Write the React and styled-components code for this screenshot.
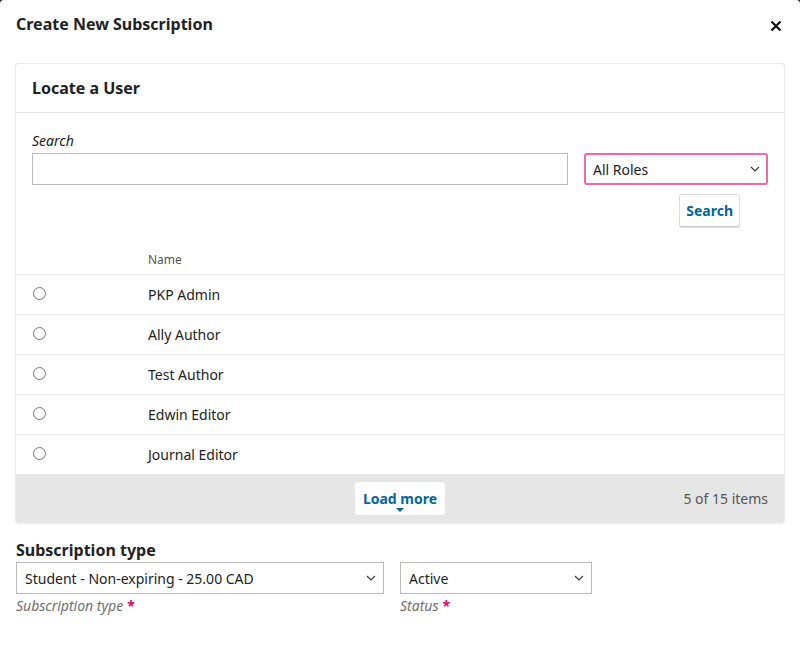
import React from 'react';
import styled, { createGlobalStyle } from 'styled-components';

const GlobalStyle = createGlobalStyle`
  html, body {
    margin: 0;
    padding: 0;
    background: #2a2a2a;
  }
  body {
    font-family: 'Noto Sans', 'Open Sans', sans-serif;
    color: #222;
  }
`;

const Modal = styled.div`
  background: #fff;
  border-radius: 4px 4px 0 0;
  min-height: 650px;
  padding: 0 16px;
  box-sizing: border-box;
`;

const ModalHeader = styled.div`
  display: flex;
  align-items: center;
  justify-content: space-between;
  height: 48px;
  h2 {
    margin: 0;
    font-size: 16px;
    font-weight: 700;
  }
`;

const CloseButton = styled.button`
  border: 0;
  background: none;
  padding: 0;
  margin-right: 2px;
  margin-top: 4px;
  display: flex;
  cursor: pointer;
`;

const Card = styled.div`
  margin-top: 16px;
  background: #fff;
  border-radius: 3px;
  box-shadow: 0 0 0 1px #e9e9e9, 0 1px 2px rgba(0, 0, 0, 0.25);
`;

const CardHeader = styled.div`
  height: 48px;
  display: flex;
  align-items: center;
  padding: 0 16px;
  border-bottom: 1px solid #e2e2e2;
  font-size: 16px;
  font-weight: 700;
`;

const SearchArea = styled.div`
  padding: 18px 16px 17px;
`;

const FieldLabel = styled.label`
  display: block;
  font-size: 14px;
  font-style: italic;
  line-height: 20px;
  margin-bottom: 2px;
  color: ${({ muted }) => (muted ? '#707070' : '#222')};
`;

const SearchRow = styled.div`
  display: grid;
  grid-template-columns: 1fr 184px;
  gap: 16px;
`;

const TextInput = styled.input`
  height: 32px;
  box-sizing: border-box;
  border: 1px solid #bbb;
  border-radius: 0;
  padding: 0 8px;
  font: inherit;
  font-size: 14px;
`;

const SelectWrap = styled.div`
  position: relative;
  width: ${({ width }) => width || 'auto'};
  svg {
    position: absolute;
    right: 8px;
    top: 50%;
    transform: translateY(-50%);
    pointer-events: none;
  }
`;

const Select = styled.select`
  appearance: none;
  width: 100%;
  height: 32px;
  box-sizing: border-box;
  background: #fff;
  border: ${({ focused }) => (focused ? '2px solid #ec6aa6' : '1px solid #bbb')};
  border-radius: ${({ focused }) => (focused ? '3px' : '0')};
  padding: 0 ${({ focused }) => (focused ? '7px' : '8px')};
  font: inherit;
  font-size: 14px;
  color: #222;
  outline: none;
`;

const ButtonRow = styled.div`
  display: flex;
  justify-content: flex-end;
  margin-top: 9px;
  padding-right: 28px;
`;

const Button = styled.button`
  height: 33px;
  padding: 0 6px;
  background: #fff;
  border: 1px solid #ddd;
  border-bottom-color: #ccc;
  border-radius: 3px;
  box-shadow: 0 1px 0 #ddd;
  font: inherit;
  font-size: 14px;
  font-weight: 700;
  color: #006798;
  cursor: pointer;
`;

const Table = styled.div`
  font-size: 14px;
`;

const Row = styled.div`
  display: grid;
  grid-template-columns: 132px 1fr;
  align-items: center;
  height: ${({ head }) => (head ? '30px' : '39px')};
  border-bottom: 1px solid #e6e6e6;
  ${({ head }) => head && 'font-size: 12px; color: #555;'}
`;

const Radio = styled.span`
  width: 11px;
  height: 11px;
  border: 1px solid #767676;
  border-radius: 50%;
  margin-left: 17px;
  margin-top: -2px;
`;

const Footer = styled.div`
  display: grid;
  grid-template-columns: 1fr auto 1fr;
  align-items: center;
  height: 47px;
  background: #e6e6e6;
  padding: 0 16px;
  border-radius: 0 0 3px 3px;
`;

const LoadMore = styled.button`
  position: relative;
  height: 33px;
  width: 90px;
  background: #fff;
  border: 0;
  border-radius: 3px;
  font: inherit;
  font-size: 14px;
  font-weight: 700;
  color: #006798;
  padding: 0;
  cursor: pointer;
  &::after {
    content: '';
    position: absolute;
    left: 50%;
    bottom: 3px;
    margin-left: -4px;
    border: 4px solid transparent;
    border-top-color: #006798;
    border-bottom: 0;
  }
`;

const Count = styled.span`
  justify-self: end;
  color: #555;
  font-size: 14px;
`;

const Section = styled.div`
  margin-top: 17px;
  h3 {
    margin: 0;
    font-size: 16px;
    font-weight: 700;
    line-height: 22px;
    margin-bottom: 1px;
  }
`;

const FieldRow = styled.div`
  display: flex;
  gap: 16px;
`;

const Field = styled.div`
  label {
    margin-top: 2px;
  }
`;

const Required = styled.span`
  color: #d00a6c;
  font-style: normal;
  font-weight: 700;
  margin-left: 4px;
`;

const Chevron = () => (
  <svg width="10" height="6" viewBox="0 0 10 6" fill="none">
    <path d="M1 1l4 4 4-4" stroke="#333" strokeWidth="1.1" />
  </svg>
);

const users = ['PKP Admin', 'Ally Author', 'Test Author', 'Edwin Editor', 'Journal Editor'];

const App = () => (
  <>
    <GlobalStyle />
    <Modal>
      <ModalHeader>
        <h2>Create New Subscription</h2>
        <CloseButton aria-label="Close">
          <svg width="12" height="12" viewBox="0 0 12 12">
            <path d="M1.5 1.5l9 9M10.5 1.5l-9 9" stroke="#111" strokeWidth="2.2" />
          </svg>
        </CloseButton>
      </ModalHeader>

      <Card>
        <CardHeader>Locate a User</CardHeader>
        <SearchArea>
          <FieldLabel>Search</FieldLabel>
          <SearchRow>
            <TextInput type="text" />
            <SelectWrap>
              <Select focused defaultValue="all">
                <option value="all">All Roles</option>
              </Select>
              <Chevron />
            </SelectWrap>
          </SearchRow>
          <ButtonRow>
            <Button>Search</Button>
          </ButtonRow>
        </SearchArea>
        <Table>
          <Row head>
            <span />
            <span>Name</span>
          </Row>
          {users.map((name) => (
            <Row key={name}>
              <Radio />
              <span>{name}</span>
            </Row>
          ))}
        </Table>
        <Footer>
          <span />
          <LoadMore>Load more</LoadMore>
          <Count>5 of 15 items</Count>
        </Footer>
      </Card>

      <Section>
        <h3>Subscription type</h3>
        <FieldRow>
          <Field>
            <SelectWrap width="368px">
              <Select defaultValue="student">
                <option value="student">Student - Non-expiring - 25.00 CAD</option>
              </Select>
              <Chevron />
            </SelectWrap>
            <FieldLabel muted>
              Subscription type<Required>*</Required>
            </FieldLabel>
          </Field>
          <Field>
            <SelectWrap width="192px">
              <Select defaultValue="active">
                <option value="active">Active</option>
              </Select>
              <Chevron />
            </SelectWrap>
            <FieldLabel muted>
              Status<Required>*</Required>
            </FieldLabel>
          </Field>
        </FieldRow>
      </Section>
    </Modal>
  </>
);

export default App;
